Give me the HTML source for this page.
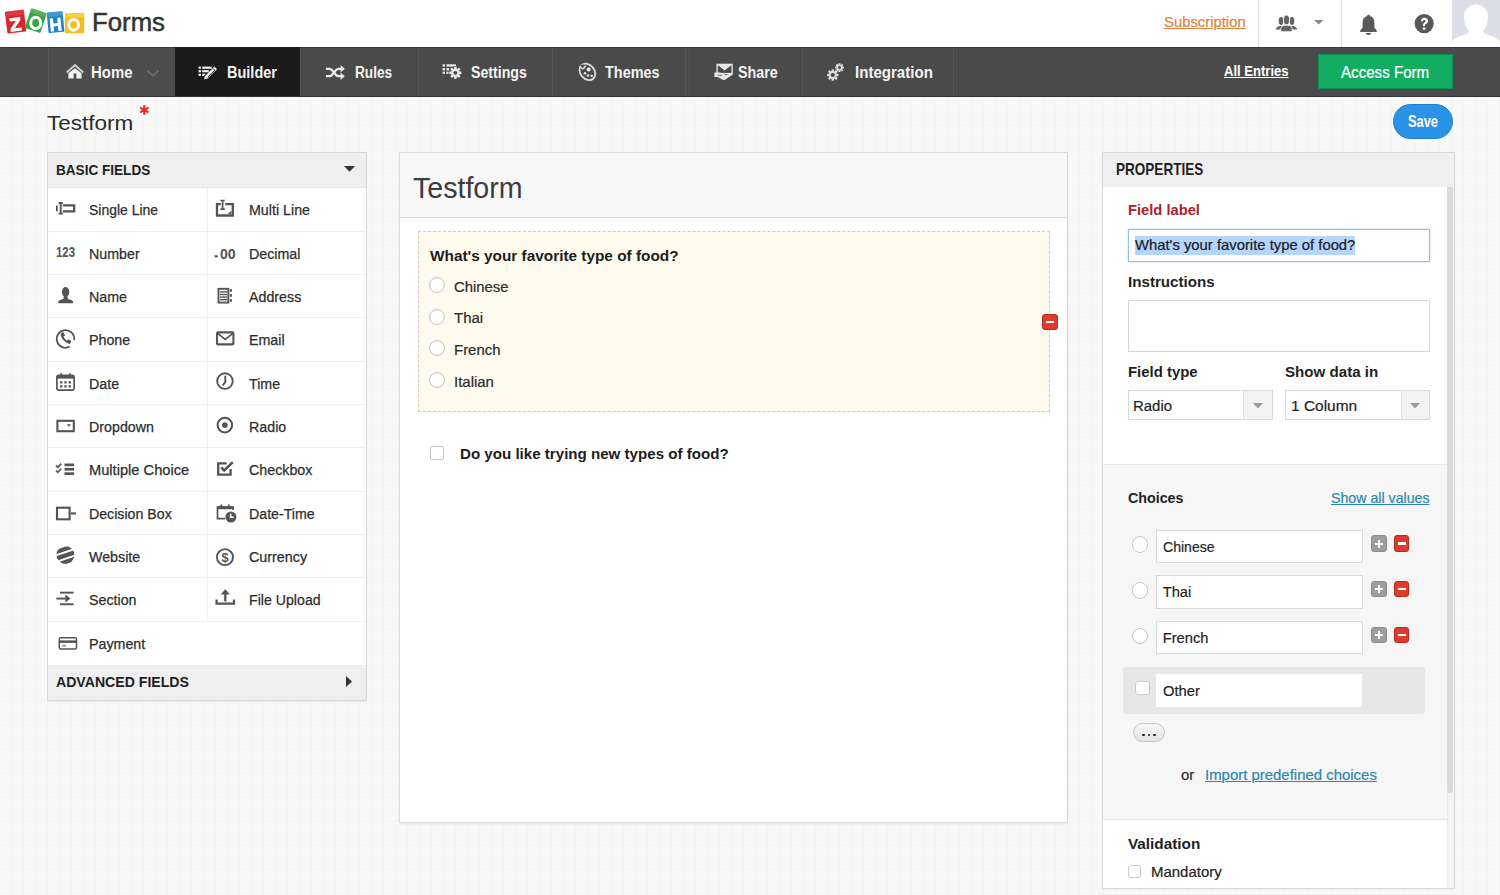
<!DOCTYPE html>
<html><head><meta charset="utf-8">
<style>
*{margin:0;padding:0;box-sizing:border-box}
html,body{width:1500px;height:895px;overflow:hidden}
body{font-family:"Liberation Sans",sans-serif;color:#222;position:relative;
background-color:#f8f8f8;
background-image:linear-gradient(#f4f4f4 1px,transparent 1px),linear-gradient(90deg,#f4f4f4 1px,transparent 1px);
background-size:12px 12px;background-position:11px 5px}
.a{position:absolute}
.t{position:absolute;white-space:nowrap;line-height:1;transform-origin:0 0}
svg{position:absolute;display:block;overflow:visible}
</style></head>
<body>
<div class="a" style="left:0.00px;top:0.00px;width:1500.00px;height:47.00px;background:#fff"></div>
<svg style="left:0.00px;top:0.00px" width="90" height="40" viewBox="0 0 90 40">
  <g transform="rotate(-7 15.6 21.6)"><rect x="6.1" y="10.6" width="19" height="22" rx="1" fill="#d9262d"/><rect x="6.1" y="10.6" width="19" height="5" fill="#e5484c" opacity="0.6"/>
   <path d="M9.8 17.6h10.8v3l-6.6 7.6h6.8v3.1H9.5v-3l6.6-7.6H9.8z" fill="#fff"/></g>
  <g transform="rotate(18 35.8 20.6)"><rect x="27.6" y="10.2" width="16.4" height="20.8" rx="1" fill="#35a443"/><rect x="27.6" y="10.2" width="16.4" height="4.5" fill="#6cc070" opacity="0.5"/></g>
  <ellipse cx="35.7" cy="23" rx="5" ry="5.6" fill="none" stroke="#fff" stroke-width="3.1"/>
  <g transform="rotate(-5.5 55.5 22.2)"><rect x="47.6" y="11.9" width="15.9" height="20.6" rx="1" fill="#1f83c9"/><rect x="47.6" y="11.9" width="15.9" height="4.5" fill="#5fb0e6" opacity="0.5"/>
   <path d="M50 18h3.3v5.2h4.3V18h3.3v13.2h-3.3v-5h-4.3v5H50z" fill="#fff"/></g>
  <rect x="65" y="12.9" width="19.2" height="20.4" rx="1" fill="#f5bd1b"/><rect x="65" y="12.9" width="19.2" height="4.5" fill="#fbd94a" opacity="0.7"/>
  <ellipse cx="73.6" cy="24.8" rx="4.9" ry="5.3" fill="none" stroke="#fff" stroke-width="3.1"/></svg>
<div class="t" style="left:92.00px;top:9.75px;font-size:25.10px;color:#333;transform:scaleX(1.0266);-webkit-text-stroke:0.5px #333">Forms</div>
<div class="t" style="left:1163.50px;top:14.61px;font-size:14.40px;color:#df813c;-webkit-text-stroke:0.2px #df813c;transform:scaleX(1.0310);text-decoration:underline;text-decoration-thickness:1px;text-underline-offset:1px">Subscription</div>
<div class="a" style="left:1257.50px;top:0.00px;width:1.00px;height:47.00px;background:#e6e6e6"></div>
<div class="a" style="left:1341.00px;top:0.00px;width:1.00px;height:47.00px;background:#e6e6e6"></div>
<svg style="left:1275.00px;top:15.00px" width="24" height="18" viewBox="0 0 24 18"><g fill="#636363">
   <ellipse cx="6" cy="6" rx="2.3" ry="4"/><path d="M0.8 14.5c.4-1.8 1.6-3 4-3.4h2.8l-.6 3.4z"/>
   <ellipse cx="17" cy="6" rx="2.3" ry="4"/><path d="M22.2 14.5c-.4-1.8-1.6-3-4-3.4h-2.8l.6 3.4z"/>
   <ellipse cx="11.5" cy="5" rx="3.1" ry="4.9" stroke="#fff" stroke-width="0.9"/><path d="M5.8 16.8v-3.2c.4-2.2 2.2-3.4 4.4-3.4h2.6c2.2 0 4 1.2 4.4 3.4v3.2z" stroke="#fff" stroke-width="0.9"/></g></svg>
<svg style="left:1314.00px;top:20.00px" width="10" height="5" viewBox="0 0 10 5"><path d="M0 0h9.5L4.75 4.5z" fill="#8a8a8a"/></svg>
<svg style="left:1359.00px;top:14.00px" width="20" height="22" viewBox="0 0 20 22"><path d="M9.5 0.8c1 0 1.5.6 1.5 1.3 3 .8 4.4 3.3 4.4 6.6v4.8l2.3 3v1.4H1.3v-1.4l2.3-3V8.7c0-3.3 1.4-5.8 4.4-6.6 0-.7.5-1.3 1.5-1.3z" fill="#595959"/>
  <path d="M6.8 19h5.4c-.2 1.3-1.2 2-2.7 2s-2.5-.7-2.7-2z" fill="#595959"/></svg>
<svg style="left:1413.50px;top:14.00px" width="21" height="20" viewBox="0 0 21 20"><circle cx="10.2" cy="9.6" r="9.6" fill="#595959"/>
  <path d="M6.9 7.3c0-2.1 1.4-3.5 3.5-3.5 2.2 0 3.6 1.3 3.6 3.1 0 1.5-.9 2.3-1.9 2.9-.8.5-1 .9-1 1.8v.4H9v-.6c0-1.3.4-2.1 1.3-2.7.8-.5 1.2-.9 1.2-1.6 0-.7-.5-1.1-1.2-1.1-.8 0-1.3.5-1.3 1.3z" fill="#fff"/>
  <circle cx="10.1" cy="14.6" r="1.45" fill="#fff"/></svg>
<div class="a" style="left:1452.00px;top:0.00px;width:48.00px;height:47.00px;background:#dcdfe7;overflow:hidden"></div>
<svg style="left:1452.00px;top:0.00px" width="48" height="47" viewBox="0 0 48 47"><path d="M24 4.5C31.5 4.5 36 9.5 36 16.5C36 22.5 34.2 27.5 31 30.5L32.5 33.8C39.5 35.8 45.5 38.2 48 41.5V47H0V41.5C2.5 38.2 8.5 35.8 15.5 33.8L17 30.5C13.8 27.5 12 22.5 12 16.5C12 9.5 16.5 4.5 24 4.5z" fill="#fff"/></svg>
<div class="a" style="left:0.00px;top:47.00px;width:1500.00px;height:49.50px;background:#4a4a4a;border-top:1px solid #363636;border-bottom:1px solid #353535"></div>
<div class="a" style="left:48.00px;top:48.00px;width:127.00px;height:47.50px;background:#4c4c4c"></div>
<div class="a" style="left:48.00px;top:48.00px;width:1.00px;height:47.50px;background:#545454"></div>
<div class="a" style="left:51.00px;top:48.00px;width:1.00px;height:47.50px;background:#4f4f4f"></div>
<div class="a" style="left:418.00px;top:48.00px;width:1.00px;height:47.50px;background:#545454"></div>
<div class="a" style="left:421.00px;top:48.00px;width:1.00px;height:47.50px;background:#4f4f4f"></div>
<div class="a" style="left:552.00px;top:48.00px;width:1.00px;height:47.50px;background:#545454"></div>
<div class="a" style="left:555.00px;top:48.00px;width:1.00px;height:47.50px;background:#4f4f4f"></div>
<div class="a" style="left:685.00px;top:48.00px;width:1.00px;height:47.50px;background:#545454"></div>
<div class="a" style="left:688.00px;top:48.00px;width:1.00px;height:47.50px;background:#4f4f4f"></div>
<div class="a" style="left:802.00px;top:48.00px;width:1.00px;height:47.50px;background:#545454"></div>
<div class="a" style="left:805.00px;top:48.00px;width:1.00px;height:47.50px;background:#4f4f4f"></div>
<div class="a" style="left:953.00px;top:48.00px;width:1.00px;height:47.50px;background:#545454"></div>
<div class="a" style="left:956.00px;top:48.00px;width:1.00px;height:47.50px;background:#4f4f4f"></div>
<div class="a" style="left:175.00px;top:47.00px;width:125.00px;height:49.00px;background:#1b1b1b"></div>
<div class="a" style="left:300.00px;top:48.00px;width:1.00px;height:47.50px;background:#575757"></div>
<svg style="left:65.50px;top:64.00px" width="19" height="16" viewBox="0 0 19 16"><path d="M0.7 8.4L9 1.1L17.3 8.4" fill="none" stroke="#cfcfcf" stroke-width="2"/><path d="M2.4 9.2L9 4.3L15.6 9.2V14.6H10.4V9.4H7.6V14.6H2.4z" fill="#f2f2f2"/></svg>
<div class="t" style="left:91.30px;top:64.99px;font-size:15.60px;color:#f4f4f4;font-weight:bold;transform:scaleX(0.9575);">Home</div>
<svg style="left:147.00px;top:70.00px" width="12" height="7" viewBox="0 0 12 7"><path d="M0.6 0.6l5.4 5.4 5.4-5.4" fill="none" stroke="#707070" stroke-width="1.5"/></svg>
<svg style="left:197.50px;top:65.00px" width="21" height="15" viewBox="0 0 21 15"><g fill="#f2f2f2">
   <rect x="0.6" y="1.6" width="2.3" height="2.2"/><rect x="4.2" y="1.6" width="9.4" height="2.2"/>
   <rect x="0.6" y="5.1" width="2.3" height="2.2"/><rect x="4.2" y="5.1" width="6.6" height="2.2"/>
   <rect x="0.6" y="8.7" width="2.3" height="2.2"/><path d="M4.2 8.7h3.6l-2 2.2H4.2z"/></g>
   <path d="M16.4 1.6l2.6 2.6-9.4 9.2-3.6 1.1 1-3.6z" fill="#e8e8e8"/><path d="M15.2 3.6l1.7 1.7-7 6.9" stroke="#1b1b1b" stroke-width="0.9" fill="none"/></svg>
<div class="t" style="left:226.70px;top:64.99px;font-size:15.60px;color:#f4f4f4;font-weight:bold;transform:scaleX(0.9304);">Builder</div>
<svg style="left:325.50px;top:64.50px" width="19" height="15" viewBox="0 0 19 15"><g fill="none" stroke="#e8e8e8" stroke-width="2.3">
   <path d="M0 3.8h3.5c3.6 0 5.4 7.4 9 7.4H15.5"/><path d="M0 11.2h3.5c3.6 0 5.4-7.4 9-7.4H15.5"/></g>
   <path d="M14.6 0l4.2 3.8-4.2 3.8zM14.6 7.4l4.2 3.8-4.2 3.8z" fill="#e8e8e8"/></svg>
<div class="t" style="left:355.00px;top:64.99px;font-size:15.60px;color:#f4f4f4;font-weight:bold;transform:scaleX(0.8757);">Rules</div>
<svg style="left:442.50px;top:63.00px" width="20" height="18" viewBox="0 0 20 18"><g fill="#e8e8e8">
   <rect x="-0.4" y="1.3" width="2.4" height="2.3"/><rect x="3.4" y="1.3" width="9.6" height="2.3"/>
   <rect x="-0.4" y="5" width="2.4" height="2.3"/><rect x="3.4" y="5" width="2.6" height="2.3"/>
   <rect x="-0.4" y="8.6" width="2.4" height="2.3"/><rect x="3.4" y="8.6" width="2.2" height="2.3"/></g>
   <g transform="translate(12.4 9.8)"><circle r="6.6" fill="#4a4a4a"/><circle r="4.4" fill="#e6e6e6"/><g fill="#e6e6e6"><rect x="-1.25" y="-6.1" width="2.5" height="12.2"/><rect x="-6.1" y="-1.25" width="12.2" height="2.5"/><rect x="-1.25" y="-6.1" width="2.5" height="12.2" transform="rotate(45)"/><rect x="-1.25" y="-6.1" width="2.5" height="12.2" transform="rotate(-45)"/></g><circle r="1.9" fill="#4a4a4a"/></g></svg>
<div class="t" style="left:470.70px;top:64.99px;font-size:15.60px;color:#f4f4f4;font-weight:bold;transform:scaleX(0.9083);">Settings</div>
<svg style="left:577.50px;top:62.50px" width="19" height="19" viewBox="0 0 19 19"><ellipse cx="9.4" cy="8.9" rx="9" ry="7" transform="rotate(50 9.4 8.9)" fill="none" stroke="#dedede" stroke-width="1.8"/>
   <circle cx="4.6" cy="4.3" r="2.8" fill="#4a4a4a"/><path d="M1.9 3.2Q4.4 8.6 7.6 2.6" fill="none" stroke="#dedede" stroke-width="1.7"/>
   <circle cx="10.6" cy="6.4" r="2" fill="#eee"/><circle cx="7" cy="10.3" r="1.3" fill="#dedede"/><circle cx="9.9" cy="12.5" r="1.3" fill="#dedede"/><circle cx="13.7" cy="12.7" r="1.3" fill="#dedede"/></svg>
<div class="t" style="left:604.80px;top:64.99px;font-size:15.60px;color:#f4f4f4;font-weight:bold;transform:scaleX(0.9261);">Themes</div>
<svg style="left:713.50px;top:63.00px" width="19" height="18" viewBox="0 0 19 18"><rect x="3.1" y="1.4" width="15" height="9.2" fill="none" stroke="#e8e8e8" stroke-width="1.4"/>
   <path d="M3.1 1.4h15L10.6 7.6z" fill="#e8e8e8"/>
   <path d="M0.4 9.6H5.6C7.2 9.6 8.4 10.6 9.6 11.3L11.6 12.2L17.3 10.3C18.6 9.9 19.2 11.2 18.1 12L11.4 16.4C10.4 17.1 9.2 17.1 8.2 16.5L3.6 14.1H0.4z" fill="#e8e8e8"/>
   <path d="M3.5 12.2L8 12.3" stroke="#4a4a4a" stroke-width="0.8"/></svg>
<div class="t" style="left:737.80px;top:64.99px;font-size:15.60px;color:#f4f4f4;font-weight:bold;transform:scaleX(0.9179);">Share</div>
<svg style="left:827.00px;top:63.00px" width="17" height="18" viewBox="0 0 17 18">
   <g transform="translate(5.8 12)"><g fill="#dcdcdc"><circle r="3.9"/><rect x="-1.2" y="-5.7" width="2.4" height="11.4"/><rect x="-5.7" y="-1.2" width="11.4" height="2.4"/><rect x="-1.2" y="-5.7" width="2.4" height="11.4" transform="rotate(45)"/><rect x="-1.2" y="-5.7" width="2.4" height="11.4" transform="rotate(-45)"/></g><circle r="2.1" fill="#4a4a4a"/></g>
   <g transform="translate(12.5 4.6)"><g fill="#dcdcdc"><circle r="3"/><rect x="-0.95" y="-4.4" width="1.9" height="8.8"/><rect x="-4.4" y="-0.95" width="8.8" height="1.9"/><rect x="-0.95" y="-4.4" width="1.9" height="8.8" transform="rotate(45)"/><rect x="-0.95" y="-4.4" width="1.9" height="8.8" transform="rotate(-45)"/></g><circle r="1.5" fill="#4a4a4a"/></g></svg>
<div class="t" style="left:855.40px;top:64.99px;font-size:15.60px;color:#f4f4f4;font-weight:bold;transform:scaleX(0.9665);">Integration</div>
<div class="t" style="left:1223.50px;top:64.06px;font-size:14.70px;color:#fff;font-weight:bold;transform:scaleX(0.8885);text-decoration:underline;text-decoration-thickness:1px">All Entries</div>
<div class="a" style="left:1317.50px;top:53.70px;width:135.80px;height:35.70px;background:#12ad63;border:1px solid #0f8f52"></div>
<div class="t" style="left:1341.30px;top:64.27px;font-size:16.10px;color:#fff;-webkit-text-stroke:0.2px #fff;transform:scaleX(0.9390);">Access Form</div>
<div class="t" style="left:47.20px;top:111.92px;font-size:21.00px;color:#2b2b2b;transform:scaleX(1.0718);-webkit-text-stroke:0">Testform</div>
<svg style="left:139.00px;top:105.00px" width="11" height="10" viewBox="0 0 11 10"><g stroke="#e62a2a" stroke-width="2.2" stroke-linecap="butt"><path d="M5.3 0.2v9.4"/><path d="M1.1 2.6l8.4 4.8"/><path d="M1.1 7.4l8.4-4.8"/></g></svg>
<div class="a" style="left:47.00px;top:152.00px;width:320.00px;height:549.00px;background:#fff;border:1px solid #d9d9d9;box-shadow:0 1px 1px rgba(0,0,0,0.04)"></div>
<div class="a" style="left:48.00px;top:153.00px;width:318.00px;height:35.00px;background:#efefef;border-bottom:1px solid #e6e6e6"></div>
<div class="t" style="left:55.80px;top:163.21px;font-size:14.40px;color:#1f1f1f;font-weight:bold;transform:scaleX(0.9429);">BASIC FIELDS</div>
<svg style="left:344.20px;top:166.20px" width="11" height="6" viewBox="0 0 11 6"><path d="M0 0h11L5.5 5.8z" fill="#333"/></svg>
<div class="a" style="left:48.00px;top:230.83px;width:318.00px;height:1.00px;background:#f0f0f0"></div>
<div class="a" style="left:48.00px;top:274.16px;width:318.00px;height:1.00px;background:#f0f0f0"></div>
<div class="a" style="left:48.00px;top:317.49px;width:318.00px;height:1.00px;background:#f0f0f0"></div>
<div class="a" style="left:48.00px;top:360.82px;width:318.00px;height:1.00px;background:#f0f0f0"></div>
<div class="a" style="left:48.00px;top:404.15px;width:318.00px;height:1.00px;background:#f0f0f0"></div>
<div class="a" style="left:48.00px;top:447.48px;width:318.00px;height:1.00px;background:#f0f0f0"></div>
<div class="a" style="left:48.00px;top:490.81px;width:318.00px;height:1.00px;background:#f0f0f0"></div>
<div class="a" style="left:48.00px;top:534.14px;width:318.00px;height:1.00px;background:#f0f0f0"></div>
<div class="a" style="left:48.00px;top:577.47px;width:318.00px;height:1.00px;background:#f0f0f0"></div>
<div class="a" style="left:48.00px;top:620.80px;width:318.00px;height:1.00px;background:#f0f0f0"></div>
<div class="a" style="left:206.50px;top:188.00px;width:1.00px;height:433.30px;background:#f2f2f2"></div>
<svg style="left:54.00px;top:198.00px" width="24" height="22" viewBox="0 0 24 22"><path d="M2 7.6h1.8v5.6H2z" fill="#545454"/><path d="M4.6 5h4.2M4.6 15.6h4.2M6.7 5v10.6" stroke="#545454" stroke-width="1.9" fill="none"/><path d="M8.8 7.4h11.4v6H8.8" fill="none" stroke="#545454" stroke-width="2.3"/></svg>
<div class="t" style="left:89.40px;top:203.26px;font-size:14.70px;color:#2e2e2e;transform:scaleX(0.9499);-webkit-text-stroke:0.25px #2e2e2e">Single Line</div>
<svg style="left:54.00px;top:241.33px" width="24" height="22" viewBox="0 0 24 22"><text x="2" y="16.4" font-family="Liberation Sans" font-weight="bold" font-size="14.6" fill="#545454" textLength="19" lengthAdjust="spacingAndGlyphs">123</text></svg>
<div class="t" style="left:89.40px;top:246.59px;font-size:14.70px;color:#2e2e2e;transform:scaleX(0.9700);-webkit-text-stroke:0.25px #2e2e2e">Number</div>
<svg style="left:54.00px;top:284.66px" width="24" height="22" viewBox="0 0 24 22"><ellipse cx="11.6" cy="7" rx="3.7" ry="5" fill="#545454"/><path d="M9.9 11h3.4l.6 3.1c2.6.5 4.7 1.4 5.2 2.6v1.6H4.2v-1.6c.5-1.2 2.6-2.1 5.2-2.6z" fill="#545454"/></svg>
<div class="t" style="left:89.40px;top:289.92px;font-size:14.70px;color:#2e2e2e;transform:scaleX(0.9700);-webkit-text-stroke:0.25px #2e2e2e">Name</div>
<svg style="left:54.00px;top:327.99px" width="24" height="22" viewBox="0 0 24 22"><path d="M15.8 18.6A8.8 8.8 0 1 1 20.2 12.2" fill="none" stroke="#545454" stroke-width="1.7"/><path d="M7.6 4.8l2-.6 1.4 3.3-1.5 1.1c.6 1.7 1.9 3.2 3.4 4.1l1.3-1.4 3.1 1.6-.7 2.1c-.3.8-1.2 1.1-2 .8-3.7-1.4-6.6-4.5-7.8-8.2-.3-.9 0-2.4.8-2.8z" fill="#545454"/></svg>
<div class="t" style="left:89.40px;top:333.25px;font-size:14.70px;color:#2e2e2e;transform:scaleX(0.9700);-webkit-text-stroke:0.25px #2e2e2e">Phone</div>
<svg style="left:54.00px;top:371.32px" width="24" height="22" viewBox="0 0 24 22"><rect x="2.9" y="4.4" width="17.2" height="14.8" rx="1.6" fill="none" stroke="#545454" stroke-width="1.7"/><rect x="2.9" y="4.4" width="17.2" height="3.2" fill="#545454"/><rect x="6.3" y="2.2" width="1.7" height="3" fill="#545454"/><rect x="15" y="2.2" width="1.7" height="3" fill="#545454"/><g fill="#545454"><rect x="6.1" y="10.2" width="2.3" height="2.3"/><rect x="10.35" y="10.2" width="2.3" height="2.3"/><rect x="14.6" y="10.2" width="2.3" height="2.3"/><rect x="6.1" y="14.2" width="2.3" height="2.3"/><rect x="10.35" y="14.2" width="2.3" height="2.3"/><rect x="14.6" y="14.2" width="2.3" height="2.3"/></g></svg>
<div class="t" style="left:89.40px;top:376.58px;font-size:14.70px;color:#2e2e2e;transform:scaleX(0.9700);-webkit-text-stroke:0.25px #2e2e2e">Date</div>
<svg style="left:54.00px;top:414.65px" width="24" height="22" viewBox="0 0 24 22"><rect x="3.4" y="5.8" width="16.4" height="10.4" fill="none" stroke="#545454" stroke-width="2.1"/><path d="M12.8 9.3h4.2l-2.1 2.5z" fill="#545454"/></svg>
<div class="t" style="left:89.40px;top:419.91px;font-size:14.70px;color:#2e2e2e;transform:scaleX(0.9700);-webkit-text-stroke:0.25px #2e2e2e">Dropdown</div>
<svg style="left:54.00px;top:457.98px" width="24" height="22" viewBox="0 0 24 22"><path d="M2 7.4l1.9 1.8 3.2-3.6M2 12.6l1.9 1.8 3.2-3.6" fill="none" stroke="#545454" stroke-width="1.7"/><g fill="#545454"><rect x="10.5" y="5.5" width="9.6" height="2.7"/><rect x="10.5" y="9.9" width="9.6" height="2.7"/><rect x="10.5" y="14.3" width="9.6" height="2.7"/></g></svg>
<div class="t" style="left:89.40px;top:463.24px;font-size:14.70px;color:#2e2e2e;transform:scaleX(0.9980);-webkit-text-stroke:0.25px #2e2e2e">Multiple Choice</div>
<svg style="left:54.00px;top:501.31px" width="24" height="22" viewBox="0 0 24 22"><rect x="3" y="6.7" width="12.6" height="11.6" fill="none" stroke="#545454" stroke-width="2.1"/><rect x="16.6" y="11.4" width="5.4" height="2.1" fill="#545454"/></svg>
<div class="t" style="left:89.40px;top:506.57px;font-size:14.70px;color:#2e2e2e;transform:scaleX(0.9651);-webkit-text-stroke:0.25px #2e2e2e">Decision Box</div>
<svg style="left:54.00px;top:544.64px" width="24" height="22" viewBox="0 0 24 22"><defs><clipPath id="gl"><circle cx="11.4" cy="10" r="9"/></clipPath></defs><g clip-path="url(#gl)" fill="#545454"><path d="M0 5.5L24 -2.5V1.8L0 9.8z"/><path d="M0 12L24 4V8.6L0 16.6z"/><path d="M0 18.6L24 10.6V15.2L0 23.2z"/></g></svg>
<div class="t" style="left:89.40px;top:549.90px;font-size:14.70px;color:#2e2e2e;transform:scaleX(0.9700);-webkit-text-stroke:0.25px #2e2e2e">Website</div>
<svg style="left:54.00px;top:587.97px" width="24" height="22" viewBox="0 0 24 22"><g fill="#545454"><rect x="6" y="3.7" width="13.6" height="1.9"/><rect x="6" y="15.3" width="13.6" height="1.9"/><rect x="2.3" y="9.6" width="12" height="1.9"/><path d="M11.4 6.5l5.2 4.05-5.2 4.05z"/></g></svg>
<div class="t" style="left:89.40px;top:593.23px;font-size:14.70px;color:#2e2e2e;transform:scaleX(0.9700);-webkit-text-stroke:0.25px #2e2e2e">Section</div>
<svg style="left:54.00px;top:631.30px" width="24" height="22" viewBox="0 0 24 22"><rect x="5.3" y="6.8" width="17.2" height="11.2" rx="1.5" fill="none" stroke="#545454" stroke-width="1.5"/><rect x="5.3" y="9.4" width="17.2" height="2.5" fill="#545454"/><rect x="8" y="13.6" width="4.2" height="2.3" fill="#aaa"/></svg>
<div class="t" style="left:89.40px;top:636.56px;font-size:14.70px;color:#2e2e2e;transform:scaleX(0.9705);-webkit-text-stroke:0.25px #2e2e2e">Payment</div>
<svg style="left:213.00px;top:198.00px" width="24" height="22" viewBox="0 0 24 22"><path d="M7.8 6.1H4v11.4h15.8V6.1H12.3" fill="none" stroke="#545454" stroke-width="2.3"/><path d="M7.4 2.5h4.4M9.6 2.5v8.6M7.4 11.1h4.4" fill="none" stroke="#545454" stroke-width="1.7"/><path d="M18.4 12.6v3.5h-3.5z" fill="#545454"/></svg>
<div class="t" style="left:249.30px;top:203.26px;font-size:14.70px;color:#2e2e2e;transform:scaleX(0.9700);-webkit-text-stroke:0.25px #2e2e2e">Multi Line</div>
<svg style="left:213.00px;top:241.33px" width="24" height="22" viewBox="0 0 24 22"><rect x="1.5" y="14.3" width="3.3" height="2.1" fill="#545454"/><text x="7" y="17.5" font-family="Liberation Sans" font-weight="bold" font-size="14" fill="#545454" textLength="15.6" lengthAdjust="spacingAndGlyphs">00</text></svg>
<div class="t" style="left:249.30px;top:246.59px;font-size:14.70px;color:#2e2e2e;transform:scaleX(0.9700);-webkit-text-stroke:0.25px #2e2e2e">Decimal</div>
<svg style="left:213.00px;top:284.66px" width="24" height="22" viewBox="0 0 24 22"><rect x="5.5" y="3.8" width="9.8" height="13.8" fill="none" stroke="#545454" stroke-width="1.9"/><g fill="#545454"><rect x="7" y="6.2" width="7" height="1.4"/><rect x="7" y="8.8" width="7" height="1.4"/><rect x="7" y="11.4" width="7" height="1.4"/><rect x="7" y="14" width="7" height="1.4"/><rect x="16.8" y="4.1" width="2.1" height="2.7"/><rect x="16.8" y="9.1" width="2.1" height="2.7"/><rect x="16.8" y="14.1" width="2.1" height="2.7"/></g></svg>
<div class="t" style="left:249.30px;top:289.92px;font-size:14.70px;color:#2e2e2e;transform:scaleX(0.9700);-webkit-text-stroke:0.25px #2e2e2e">Address</div>
<svg style="left:213.00px;top:327.99px" width="24" height="22" viewBox="0 0 24 22"><rect x="4" y="4.4" width="16.4" height="12" rx="1" fill="none" stroke="#545454" stroke-width="2.1"/><path d="M4.5 5.3l7.7 6.2 7.7-6.2" fill="none" stroke="#545454" stroke-width="1.7"/></svg>
<div class="t" style="left:249.30px;top:333.25px;font-size:14.70px;color:#2e2e2e;transform:scaleX(0.9700);-webkit-text-stroke:0.25px #2e2e2e">Email</div>
<svg style="left:213.00px;top:371.32px" width="24" height="22" viewBox="0 0 24 22"><circle cx="11.95" cy="10.1" r="7.8" fill="none" stroke="#545454" stroke-width="1.9"/><path d="M12.3 4.8v6.4l-2.7 3.3" fill="none" stroke="#545454" stroke-width="1.9"/></svg>
<div class="t" style="left:249.30px;top:376.58px;font-size:14.70px;color:#2e2e2e;transform:scaleX(0.9700);-webkit-text-stroke:0.25px #2e2e2e">Time</div>
<svg style="left:213.00px;top:414.65px" width="24" height="22" viewBox="0 0 24 22"><circle cx="11.85" cy="10.1" r="7.3" fill="none" stroke="#545454" stroke-width="2"/><circle cx="11.85" cy="10.1" r="2.9" fill="#545454"/></svg>
<div class="t" style="left:249.30px;top:419.91px;font-size:14.70px;color:#2e2e2e;transform:scaleX(0.9700);-webkit-text-stroke:0.25px #2e2e2e">Radio</div>
<svg style="left:213.00px;top:457.98px" width="24" height="22" viewBox="0 0 24 22"><path d="M17.6 11v5.6H5.2V5.4h8.4" fill="none" stroke="#545454" stroke-width="2.3"/><path d="M8.2 9.4l3 3 8.6-8.3" fill="none" stroke="#545454" stroke-width="2.5"/></svg>
<div class="t" style="left:249.30px;top:463.24px;font-size:14.70px;color:#2e2e2e;transform:scaleX(0.9700);-webkit-text-stroke:0.25px #2e2e2e">Checkbox</div>
<svg style="left:213.00px;top:501.31px" width="24" height="22" viewBox="0 0 24 22"><path d="M12 17.6H4.5V6h15.6v3" fill="none" stroke="#545454" stroke-width="1.7"/><rect x="4.5" y="5.4" width="15.6" height="2.8" fill="#545454"/><rect x="7.4" y="3.4" width="1.7" height="2.7" fill="#545454"/><rect x="15" y="3.4" width="1.7" height="2.7" fill="#545454"/><circle cx="17.9" cy="16" r="5.5" fill="#545454"/><path d="M17.6 12.4v3.9h3.1" fill="none" stroke="#fff" stroke-width="1.5"/></svg>
<div class="t" style="left:249.30px;top:506.57px;font-size:14.70px;color:#2e2e2e;transform:scaleX(0.9667);-webkit-text-stroke:0.25px #2e2e2e">Date-Time</div>
<svg style="left:213.00px;top:544.64px" width="24" height="22" viewBox="0 0 24 22"><circle cx="11.95" cy="12.15" r="8" fill="none" stroke="#545454" stroke-width="1.9"/><text x="11.95" y="17" text-anchor="middle" font-family="Liberation Sans" font-weight="bold" font-size="12.8" fill="#545454">$</text></svg>
<div class="t" style="left:249.30px;top:549.90px;font-size:14.70px;color:#2e2e2e;transform:scaleX(0.9759);-webkit-text-stroke:0.25px #2e2e2e">Currency</div>
<svg style="left:213.00px;top:587.97px" width="24" height="22" viewBox="0 0 24 22"><path d="M3.6 11.4v4.3h17.4v-4.3" fill="none" stroke="#545454" stroke-width="2.3"/><path d="M12.3 13.4V5.4" stroke="#545454" stroke-width="2.3"/><path d="M7.7 6.4l4.6-5.1 4.6 5.1z" fill="#545454"/></svg>
<div class="t" style="left:249.30px;top:593.23px;font-size:14.70px;color:#2e2e2e;transform:scaleX(0.9643);-webkit-text-stroke:0.25px #2e2e2e">File Upload</div>
<div class="a" style="left:48.00px;top:664.50px;width:318.00px;height:35.50px;background:#efefef"></div>
<div class="t" style="left:55.70px;top:674.94px;font-size:14.60px;color:#1f1f1f;font-weight:bold;transform:scaleX(0.9664);">ADVANCED FIELDS</div>
<svg style="left:346.00px;top:676.00px" width="7" height="12" viewBox="0 0 7 12"><path d="M0 0v11L6 5.5z" fill="#333"/></svg>
<div class="a" style="left:399.00px;top:152.00px;width:669.00px;height:671.00px;background:#fff;border:1px solid #d9d9d9;box-shadow:0 1px 2px rgba(0,0,0,0.07)"></div>
<div class="a" style="left:400.00px;top:153.00px;width:667.00px;height:65.00px;background:#f8f8f8;border-bottom:1px solid #d8d8d8"></div>
<div class="t" style="left:412.90px;top:172.91px;font-size:29.40px;color:#3c3c3c;transform:scaleX(0.9723);-webkit-text-stroke:0">Testform</div>
<div class="a" style="left:417.50px;top:231.00px;width:632.50px;height:181.00px;background:#fffaee;border:1px dashed #cfcabb"></div>
<div class="t" style="left:430.20px;top:248.00px;font-size:15.00px;color:#1d1d1d;font-weight:bold;transform:scaleX(1.0241);">What's your favorite type of food?</div>
<div class="a" style="left:429.00px;top:276.60px;width:16.00px;height:16.00px;border-radius:50%;border:1px solid #c2c2c2;background:#fff"></div>
<div class="t" style="left:454.40px;top:278.63px;font-size:15.20px;color:#2b2b2b;-webkit-text-stroke:0.2px #2b2b2b;transform:scaleX(0.9790);">Chinese</div>
<div class="a" style="left:429.00px;top:308.50px;width:16.00px;height:16.00px;border-radius:50%;border:1px solid #c2c2c2;background:#fff"></div>
<div class="t" style="left:454.40px;top:310.33px;font-size:15.20px;color:#2b2b2b;-webkit-text-stroke:0.2px #2b2b2b;transform:scaleX(0.9850);">Thai</div>
<div class="a" style="left:429.00px;top:339.70px;width:16.00px;height:16.00px;border-radius:50%;border:1px solid #c2c2c2;background:#fff"></div>
<div class="t" style="left:454.40px;top:341.73px;font-size:15.20px;color:#2b2b2b;-webkit-text-stroke:0.2px #2b2b2b;transform:scaleX(0.9850);">French</div>
<div class="a" style="left:429.00px;top:371.70px;width:16.00px;height:16.00px;border-radius:50%;border:1px solid #c2c2c2;background:#fff"></div>
<div class="t" style="left:454.40px;top:373.73px;font-size:15.20px;color:#2b2b2b;-webkit-text-stroke:0.2px #2b2b2b;transform:scaleX(0.9850);">Italian</div>
<div class="a" style="left:1042.00px;top:314.00px;width:16.40px;height:15.50px;border-radius:3px;background:#de3b2e;border:1px solid #b8291f"></div>
<div class="a" style="left:1046.00px;top:320.80px;width:8.40px;height:2.20px;background:#fff"></div>
<div class="a" style="left:430.00px;top:446.30px;width:14.00px;height:14.00px;border-radius:2px;border:1px solid #c8c8c8;background:#fff"></div>
<div class="t" style="left:459.90px;top:446.23px;font-size:15.20px;color:#1d1d1d;font-weight:bold;transform:scaleX(0.9950);">Do you like trying new types of food?</div>
<div class="a" style="left:1392.60px;top:104.30px;width:60.20px;height:34.70px;border-radius:18px;background:#2b93e5;border:1px solid #1f80cf"></div>
<div class="t" style="left:1407.80px;top:113.99px;font-size:15.60px;color:#fff;font-weight:bold;transform:scaleX(0.8234);">Save</div>
<div class="a" style="left:1102.00px;top:152.00px;width:353.00px;height:737.00px;background:#fff;border:1px solid #d9d9d9;box-shadow:0 1px 2px rgba(0,0,0,0.05)"></div>
<div class="a" style="left:1103.00px;top:153.00px;width:351.00px;height:34.00px;background:#efefef"></div>
<div class="t" style="left:1115.60px;top:162.41px;font-size:15.70px;color:#1f1f1f;font-weight:bold;transform:scaleX(0.8626);">PROPERTIES</div>
<div class="a" style="left:1103.00px;top:463.50px;width:344.00px;height:356.50px;background:#f6f6f6;border-top:1px solid #e9e9e9;border-bottom:1px solid #e6e6e6"></div>
<div class="a" style="left:1447.00px;top:187.00px;width:7.00px;height:701.00px;background:#f4f4f4;border-left:1px solid #ececec"></div>
<div class="a" style="left:1447.00px;top:187.00px;width:6.00px;height:605.50px;background:#dadada;border-radius:0 0 3px 3px"></div>
<div class="t" style="left:1128.30px;top:202.56px;font-size:14.70px;color:#a8242b;font-weight:bold;transform:scaleX(1.0016);">Field label</div>
<div class="a" style="left:1127.50px;top:228.60px;width:302.90px;height:33.10px;background:#fff;border:1px solid #8fc1ea;box-shadow:0 0 2px rgba(90,160,230,0.45)"></div>
<div class="a" style="left:1134.50px;top:235.70px;width:220.60px;height:19.20px;background:#b4d5fd"></div>
<div class="t" style="left:1134.50px;top:238.01px;font-size:14.40px;color:#1a1a1a;-webkit-text-stroke:0.2px #1a1a1a;transform:scaleX(1.0301);">What's your favorite type of food?</div>
<div class="t" style="left:1128.00px;top:275.37px;font-size:14.80px;color:#1f1f1f;font-weight:bold;transform:scaleX(1.0248);">Instructions</div>
<div class="a" style="left:1127.50px;top:300.20px;width:302.90px;height:52.10px;background:#fff;border:1px solid #d6d6d6"></div>
<div class="t" style="left:1128.00px;top:364.97px;font-size:14.80px;color:#1f1f1f;font-weight:bold;transform:scaleX(1.0075);">Field type</div>
<div class="t" style="left:1284.90px;top:364.97px;font-size:14.80px;color:#1f1f1f;font-weight:bold;transform:scaleX(1.0222);">Show data in</div>
<div class="a" style="left:1127.50px;top:390.30px;width:145.00px;height:29.30px;background:#fff;border:1px solid #d8d8d8"></div>
<div class="a" style="left:1243.00px;top:391.30px;width:28.50px;height:27.30px;background:#f3f3f3;border-left:1px solid #e2e2e2"></div>
<svg style="left:1252.75px;top:403.00px" width="10" height="6" viewBox="0 0 10 6"><path d="M0 0h10L5 5.5z" fill="#9a9a9a"/></svg>
<div class="t" style="left:1133.10px;top:398.73px;font-size:14.50px;color:#1f1f1f;-webkit-text-stroke:0.2px #1f1f1f;transform:scaleX(1.0294);">Radio</div>
<div class="a" style="left:1285.30px;top:390.30px;width:144.50px;height:29.30px;background:#fff;border:1px solid #d8d8d8"></div>
<div class="a" style="left:1400.50px;top:391.30px;width:28.30px;height:27.30px;background:#f3f3f3;border-left:1px solid #e2e2e2"></div>
<svg style="left:1410.15px;top:403.00px" width="10" height="6" viewBox="0 0 10 6"><path d="M0 0h10L5 5.5z" fill="#9a9a9a"/></svg>
<div class="t" style="left:1290.90px;top:398.73px;font-size:14.50px;color:#1f1f1f;-webkit-text-stroke:0.2px #1f1f1f;transform:scaleX(1.0667);">1 Column</div>
<div class="t" style="left:1127.90px;top:491.34px;font-size:14.60px;color:#1f1f1f;font-weight:bold;transform:scaleX(0.9754);">Choices</div>
<div class="t" style="left:1331.40px;top:490.81px;font-size:14.40px;color:#2a89ad;-webkit-text-stroke:0.2px #2a89ad;transform:scaleX(0.9854);text-decoration:underline;text-decoration-thickness:1px">Show all values</div>
<div class="a" style="left:1131.70px;top:536.40px;width:16.70px;height:16.70px;border-radius:50%;border:1px solid #c6c6c6;background:#fff"></div>
<div class="a" style="left:1155.60px;top:529.60px;width:207.00px;height:33.50px;background:#fff;border:1px solid #d9d9d9"></div>
<div class="t" style="left:1162.70px;top:539.56px;font-size:14.70px;color:#1f1f1f;-webkit-text-stroke:0.2px #1f1f1f;transform:scaleX(0.9567);">Chinese</div>
<div class="a" style="left:1371.10px;top:535.40px;width:16.00px;height:16.20px;border-radius:3px;background:#9b9d9f;border:1px solid #8b8d8f"></div>
<svg style="left:1375.10px;top:539.50px" width="8" height="8" viewBox="0 0 8 8"><path d="M3 0h2v3h3v2H5v3H3V5H0V3h3z" fill="#fff"/></svg>
<div class="a" style="left:1393.70px;top:535.40px;width:15.80px;height:16.20px;border-radius:3px;background:#de3b2e;border:1px solid #b8291f"></div>
<div class="a" style="left:1397.60px;top:542.40px;width:8.00px;height:2.30px;background:#fff"></div>
<div class="a" style="left:1131.70px;top:582.00px;width:16.70px;height:16.70px;border-radius:50%;border:1px solid #c6c6c6;background:#fff"></div>
<div class="a" style="left:1155.60px;top:575.20px;width:207.00px;height:33.50px;background:#fff;border:1px solid #d9d9d9"></div>
<div class="t" style="left:1162.70px;top:585.16px;font-size:14.70px;color:#1f1f1f;-webkit-text-stroke:0.2px #1f1f1f;transform:scaleX(1.0000);">Thai</div>
<div class="a" style="left:1371.10px;top:581.00px;width:16.00px;height:16.20px;border-radius:3px;background:#9b9d9f;border:1px solid #8b8d8f"></div>
<svg style="left:1375.10px;top:585.10px" width="8" height="8" viewBox="0 0 8 8"><path d="M3 0h2v3h3v2H5v3H3V5H0V3h3z" fill="#fff"/></svg>
<div class="a" style="left:1393.70px;top:581.00px;width:15.80px;height:16.20px;border-radius:3px;background:#de3b2e;border:1px solid #b8291f"></div>
<div class="a" style="left:1397.60px;top:588.00px;width:8.00px;height:2.30px;background:#fff"></div>
<div class="a" style="left:1131.70px;top:627.60px;width:16.70px;height:16.70px;border-radius:50%;border:1px solid #c6c6c6;background:#fff"></div>
<div class="a" style="left:1155.60px;top:620.80px;width:207.00px;height:33.50px;background:#fff;border:1px solid #d9d9d9"></div>
<div class="t" style="left:1162.70px;top:630.76px;font-size:14.70px;color:#1f1f1f;-webkit-text-stroke:0.2px #1f1f1f;transform:scaleX(1.0000);">French</div>
<div class="a" style="left:1371.10px;top:626.60px;width:16.00px;height:16.20px;border-radius:3px;background:#9b9d9f;border:1px solid #8b8d8f"></div>
<svg style="left:1375.10px;top:630.70px" width="8" height="8" viewBox="0 0 8 8"><path d="M3 0h2v3h3v2H5v3H3V5H0V3h3z" fill="#fff"/></svg>
<div class="a" style="left:1393.70px;top:626.60px;width:15.80px;height:16.20px;border-radius:3px;background:#de3b2e;border:1px solid #b8291f"></div>
<div class="a" style="left:1397.60px;top:633.60px;width:8.00px;height:2.30px;background:#fff"></div>
<div class="a" style="left:1123.10px;top:666.70px;width:301.70px;height:47.00px;border-radius:4px;background:#e6e6e6"></div>
<div class="a" style="left:1135.30px;top:680.60px;width:14.50px;height:14.30px;border-radius:3px;border:1px solid #c8c8c8;background:#fff"></div>
<div class="a" style="left:1156.20px;top:674.20px;width:206.30px;height:32.40px;background:#fff"></div>
<div class="t" style="left:1163.00px;top:683.56px;font-size:14.70px;color:#1f1f1f;-webkit-text-stroke:0.2px #1f1f1f;transform:scaleX(1.0037);">Other</div>
<div class="a" style="left:1133.10px;top:723.30px;width:31.60px;height:19.20px;border-radius:10px;border:1px solid #c4c4c4;background:linear-gradient(#f8f8f8,#e4e4e4)"></div>
<div class="a" style="left:1142.30px;top:733.80px;width:2.60px;height:2.60px;background:#222;border-radius:50%"></div>
<div class="a" style="left:1147.70px;top:733.80px;width:2.60px;height:2.60px;background:#222;border-radius:50%"></div>
<div class="a" style="left:1153.10px;top:733.80px;width:2.60px;height:2.60px;background:#222;border-radius:50%"></div>
<div class="t" style="left:1181.10px;top:768.46px;font-size:14.70px;color:#2a2a2a;-webkit-text-stroke:0.2px #2a2a2a;transform:scaleX(1.0175);">or</div>
<div class="t" style="left:1205.00px;top:768.46px;font-size:14.70px;color:#2a89ad;-webkit-text-stroke:0.2px #2a89ad;transform:scaleX(1.0169);text-decoration:underline;text-decoration-thickness:1px">Import predefined choices</div>
<div class="t" style="left:1128.10px;top:836.32px;font-size:15.10px;color:#1f1f1f;font-weight:bold;transform:scaleX(1.0137);">Validation</div>
<div class="a" style="left:1127.60px;top:864.70px;width:13.50px;height:13.70px;border-radius:3px;border:1px solid #c8c8c8;background:#fff"></div>
<div class="t" style="left:1150.80px;top:864.94px;font-size:14.60px;color:#222;-webkit-text-stroke:0.2px #222;transform:scaleX(1.0249);">Mandatory</div>
</body></html>
